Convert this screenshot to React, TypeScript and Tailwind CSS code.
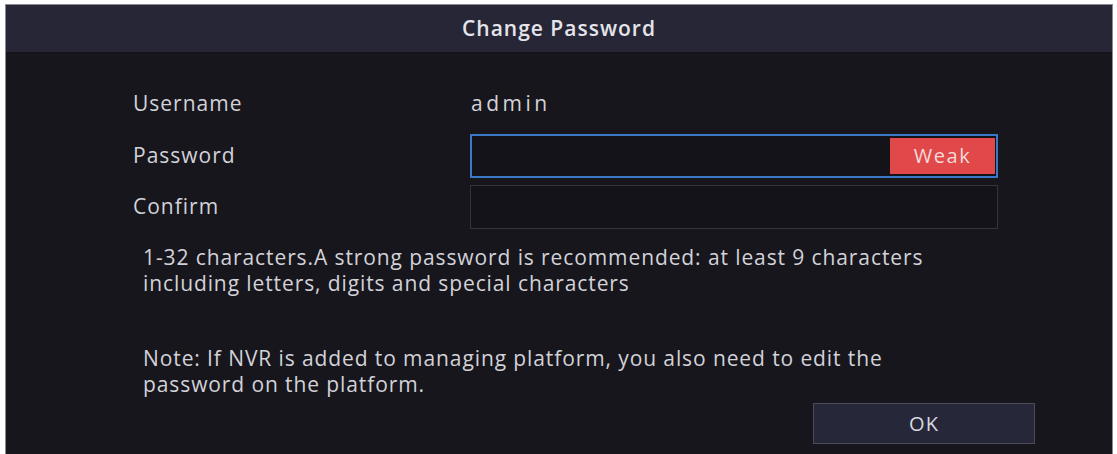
export default function App() {
  return (
    <div className="w-[1117px] h-[454px] bg-white pt-[4px] pl-[5px] pr-[4px] overflow-hidden" style={{ fontFamily: '"Open Sans", "Noto Sans", sans-serif' }}>
      <div className="h-[460px] border-x border-t border-[#8a8a94] bg-[#17161d] flex flex-col">
        <div className="h-[48px] bg-[#262637] flex items-center justify-center border-b border-[#121218]">
          <span className="text-[21px] font-semibold tracking-[1px] text-[#e4e4ea]">Change Password</span>
        </div>
        <div className="flex flex-col pl-[127px] pr-[114px] text-[#d2d2d8] text-[21px] tracking-[1px]">
          <div className="flex items-center h-[44px] mt-[29px]">
            <span className="w-[338px]">Username</span>
            <span className="tracking-[3.5px]">admin</span>
          </div>
          <div className="flex items-center h-[44px] mt-[8px]">
            <span className="w-[337px]">Password</span>
            <div className="flex-1 h-[44px] border-2 border-[#3a78c8] bg-[#141319] flex justify-end items-center pr-[1px]">
              <div className="w-[105px] h-[36px] bg-[#e0484a] text-[#f4dada] text-[20px] flex items-center justify-center tracking-[1.5px]">Weak</div>
            </div>
          </div>
          <div className="flex items-center h-[44px] mt-[7px]">
            <span className="w-[337px]">Confirm</span>
            <div className="flex-1 h-[44px] border border-[#34343e] bg-[#141319]" />
          </div>
        </div>
        <div className="pl-[137px] pr-[60px] mt-[15px] text-[21px] tracking-[0.9px] leading-[26px] text-[#d2d2d8]">
          <p>1-32 characters.A strong password is recommended: at least 9 characters<br />including letters, digits and special characters</p>
          <p className="mt-[49px]">Note: If NVR is added to managing platform, you also need to edit the<br />password on the platform.</p>
        </div>
        <div className="flex justify-end pr-[77px] mt-[6px]">
          <button className="w-[222px] h-[41px] border border-[#4a4a58] bg-[#27273a] text-[#d8d8e0] text-[20px] tracking-[1px]">OK</button>
        </div>
      </div>
    </div>
  );
}
